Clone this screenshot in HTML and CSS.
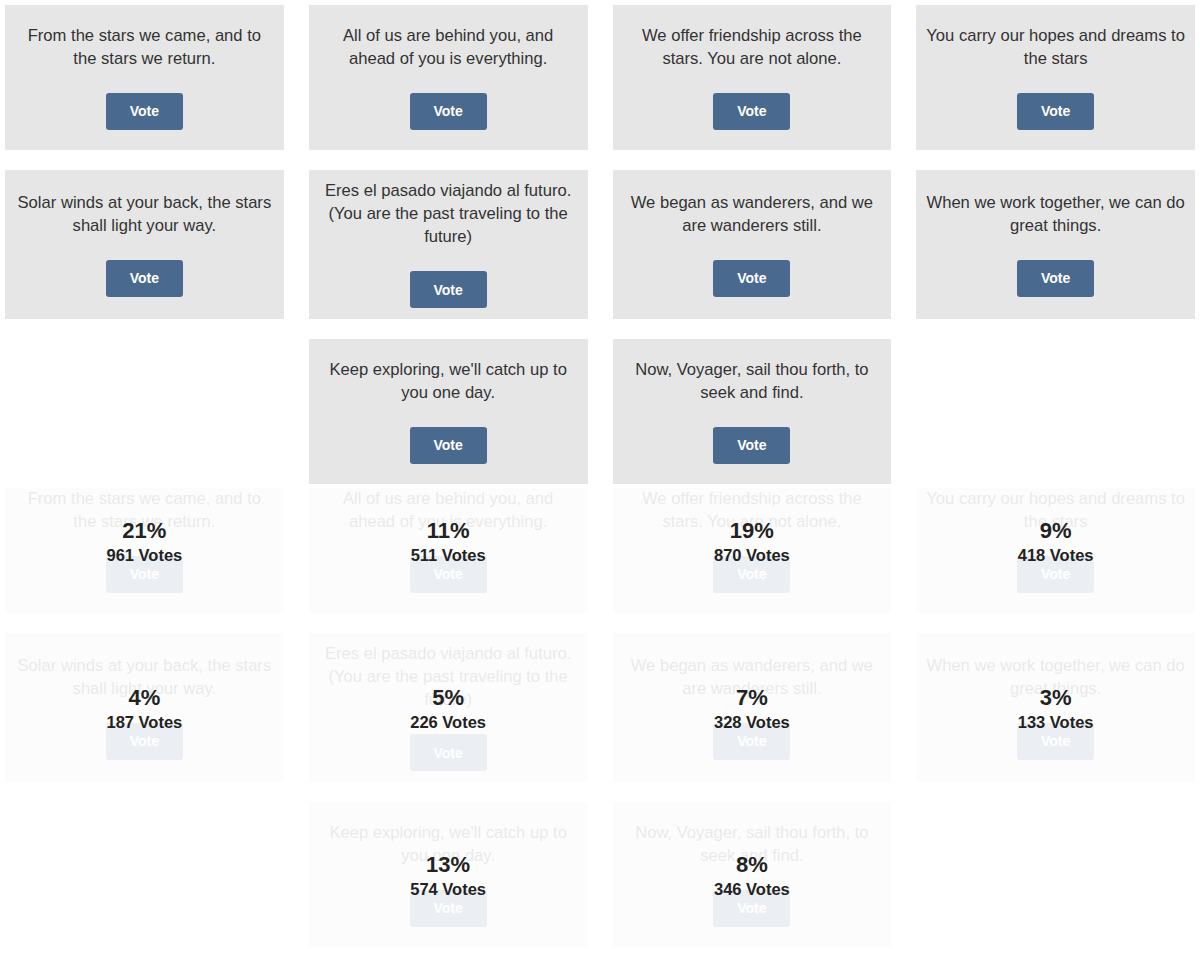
FILE: index.html
```html
<!DOCTYPE html>
<html>
<head>
<meta charset="utf-8">
<link rel="stylesheet" href="styles.css">
</head>
<body>
<section class="grid ballot">
  <div class="card"><p>From the stars we came, and to the stars we return.</p><button class="vote">Vote</button></div>
  <div class="card"><p>All of us are behind you, and ahead of you is everything.</p><button class="vote">Vote</button></div>
  <div class="card"><p>We offer friendship across the stars. You are not alone.</p><button class="vote">Vote</button></div>
  <div class="card"><p>You carry our hopes and dreams to the stars</p><button class="vote">Vote</button></div>
  <div class="card"><p>Solar winds at your back, the stars shall light your way.</p><button class="vote">Vote</button></div>
  <div class="card"><p>Eres el pasado viajando al futuro. (You are the past traveling to the future)</p><button class="vote">Vote</button></div>
  <div class="card"><p>We began as wanderers, and we are wanderers still.</p><button class="vote">Vote</button></div>
  <div class="card"><p>When we work together, we can do great things.</p><button class="vote">Vote</button></div>
  <div class="card"><p>Keep exploring, we'll catch up to you one day.</p><button class="vote">Vote</button></div>
  <div class="card"><p>Now, Voyager, sail thou forth, to seek and find.</p><button class="vote">Vote</button></div>
</section>
<section class="grid results">
  <div class="card done"><div class="faded"><p>From the stars we came, and to the stars we return.</p><button class="vote">Vote</button></div><div class="result"><span class="pct">21%</span><span class="count">961 Votes</span></div></div>
  <div class="card done"><div class="faded"><p>All of us are behind you, and ahead of you is everything.</p><button class="vote">Vote</button></div><div class="result"><span class="pct">11%</span><span class="count">511 Votes</span></div></div>
  <div class="card done"><div class="faded"><p>We offer friendship across the stars. You are not alone.</p><button class="vote">Vote</button></div><div class="result"><span class="pct">19%</span><span class="count">870 Votes</span></div></div>
  <div class="card done"><div class="faded"><p>You carry our hopes and dreams to the stars</p><button class="vote">Vote</button></div><div class="result"><span class="pct">9%</span><span class="count">418 Votes</span></div></div>
  <div class="card done"><div class="faded"><p>Solar winds at your back, the stars shall light your way.</p><button class="vote">Vote</button></div><div class="result"><span class="pct">4%</span><span class="count">187 Votes</span></div></div>
  <div class="card done"><div class="faded"><p>Eres el pasado viajando al futuro. (You are the past traveling to the future)</p><button class="vote">Vote</button></div><div class="result"><span class="pct">5%</span><span class="count">226 Votes</span></div></div>
  <div class="card done"><div class="faded"><p>We began as wanderers, and we are wanderers still.</p><button class="vote">Vote</button></div><div class="result"><span class="pct">7%</span><span class="count">328 Votes</span></div></div>
  <div class="card done"><div class="faded"><p>When we work together, we can do great things.</p><button class="vote">Vote</button></div><div class="result"><span class="pct">3%</span><span class="count">133 Votes</span></div></div>
  <div class="card done"><div class="faded"><p>Keep exploring, we'll catch up to you one day.</p><button class="vote">Vote</button></div><div class="result"><span class="pct">13%</span><span class="count">574 Votes</span></div></div>
  <div class="card done"><div class="faded"><p>Now, Voyager, sail thou forth, to seek and find.</p><button class="vote">Vote</button></div><div class="result"><span class="pct">8%</span><span class="count">346 Votes</span></div></div>
</section>
</body>
</html>
```

FILE: styles.css
```css
html, body {
  margin: 0;
  padding: 0;
  background: #ffffff;
}

body {
  font-family: "Liberation Sans", Arial, Helvetica, sans-serif;
  color: #333333;
}

.grid {
  display: flex;
  flex-wrap: wrap;
  justify-content: center;
  column-gap: 25px;
  row-gap: 20px;
  padding: 5px;
}

.ballot {
  position: relative;
  z-index: 1;
  background: #ffffff;
  padding-bottom: 4px;
}

.results {
  margin-top: -25px;
}

.card {
  position: relative;
  box-sizing: border-box;
  width: calc((100% - 75px) / 4);
  min-height: 145px;
  padding: 9px 9.7px 11px;
  background: #e6e6e6;
  display: flex;
  flex-direction: column;
  align-items: center;
  justify-content: center;
  text-align: center;
}

.card p {
  margin: 0 0 23px;
  font-size: 16.6px;
  line-height: 23px;
}

.vote {
  width: 77px;
  height: 37px;
  border: 0;
  border-radius: 3px;
  background: #4a698e;
  color: #ffffff;
  font-family: "Liberation Sans", Arial, Helvetica, sans-serif;
  font-size: 14px;
  font-weight: bold;
  padding: 0;
  flex: none;
}

.done {
  background: transparent;
  padding: 0;
  align-items: stretch;
}

.faded {
  flex: 1;
  box-sizing: border-box;
  opacity: 0.1;
  padding: 9px 9.7px 11px;
  background: #e6e6e6;
  display: flex;
  flex-direction: column;
  align-items: center;
  justify-content: center;
}

.result {
  position: absolute;
  inset: 0;
  display: flex;
  flex-direction: column;
  align-items: center;
  justify-content: center;
  color: #222222;
  font-weight: bold;
  padding-top: 3px;
}

.pct {
  font-size: 22px;
  line-height: 26px;
}

.count {
  font-size: 16.5px;
  line-height: 22px;
}
```
